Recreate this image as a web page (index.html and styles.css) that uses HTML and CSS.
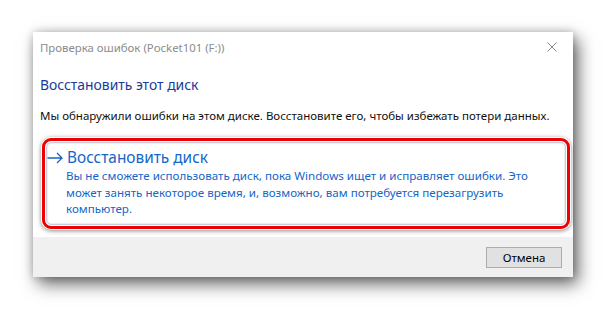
FILE: index.html
```html
<!DOCTYPE html>
<html lang="ru">
<head>
<meta charset="utf-8">
<title>Проверка ошибок</title>
<link rel="stylesheet" href="styles.css">
</head>
<body>
<div class="dialog">
  <div class="titlebar">
    <span class="title">Проверка ошибок (Pocket101 (F:))</span>
    <svg class="close" width="10" height="10" viewBox="0 0 10 10"><path d="M0.5 0.5L9.5 9.5M9.5 0.5L0.5 9.5" stroke="#8a8a8a" stroke-width="1" fill="none"/></svg>
  </div>
  <div class="content">
    <h1 class="heading">Восстановить этот диск</h1>
    <p class="message">Мы обнаружили ошибки на этом диске. Восстановите его, чтобы избежать потери данных.</p>
    <div class="highlight">
      <div class="cmdlink">
        <div class="cmd-head">
          <svg class="arrow" width="16" height="12" viewBox="0 0 16 12"><path d="M0.5 6H15M10 1L15 6L10 11" stroke="#1466c8" stroke-width="1.3" fill="none"/></svg>
          <span class="cmd-title">Восстановить диск</span>
        </div>
        <p class="cmd-desc">Вы не сможете использовать диск, пока Windows ищет и исправляет ошибки. Это может занять некоторое время, и, возможно, вам потребуется перезагрузить компьютер.</p>
      </div>
    </div>
  </div>
  <div class="footer">
    <button class="btn">Отмена</button>
  </div>
</div>
</body>
</html>
```
FILE: styles.css
```css
html, body {
  margin: 0;
  padding: 0;
  background: #ffffff;
}
body {
  font-family: "Noto Sans", "Open Sans", sans-serif;
  width: 606px;
  height: 310px;
  overflow: hidden;
}
.dialog {
  margin: 32px 0 0 33px;
  width: 540px;
  height: 245px;
  background: #ffffff;
  display: flex;
  flex-direction: column;
  box-shadow: 5px 7px 16px rgba(0, 0, 0, 0.6), 0 0 8px rgba(0, 0, 0, 0.2);
}
.titlebar {
  height: 30px;
  display: flex;
  align-items: center;
  justify-content: space-between;
  padding: 0 16px 0 7px;
}
.title {
  font-size: 11.4px;
  color: #8c8c8c;
}
.close {
  display: block;
}
.content {
  flex: 1;
  padding: 0 5px 0 7px;
}
.heading {
  margin: 13px 0 0 0;
  font-size: 13.9px;
  font-weight: normal;
  color: #1a3a9c;
  line-height: 20px;
}
.message {
  margin: 13px 0 0 0;
  font-size: 11.5px;
  line-height: 16px;
  color: #111;
}
.highlight {
  margin: 14px 0 0 2px;
  width: 520px;
  border: 3px solid #f00000;
  border-radius: 9px;
  box-shadow: 0 0 0 1px #ffffff, 0 1px 4px 1px rgba(0, 0, 0, 0.45);
  padding: 1px;
}
.cmdlink {
  border: 1px solid #c4cfdc;
  border-radius: 5px;
  box-shadow: inset 0 0 2px rgba(0, 0, 0, 0.25);
  padding: 5px 8px 6px 0;
}
.cmd-head {
  display: flex;
  align-items: center;
  gap: 4px;
}
.arrow {
  display: block;
}
.cmd-title {
  font-size: 15.4px;
  line-height: 20px;
  color: #1466c8;
}
.cmd-desc {
  margin: 0 0 0 19px;
  font-size: 11.6px;
  line-height: 16.5px;
  color: #1466c8;
}
.footer {
  height: 40px;
  background: #f0f0f0;
  display: flex;
  align-items: center;
  justify-content: flex-end;
  padding-right: 11px;
}
.btn {
  width: 76px;
  height: 21px;
  border: 1px solid #adadad;
  background: #e1e1e1;
  font-family: "Noto Sans", sans-serif;
  font-size: 11.5px;
  color: #000;
  padding: 0;
}
```
